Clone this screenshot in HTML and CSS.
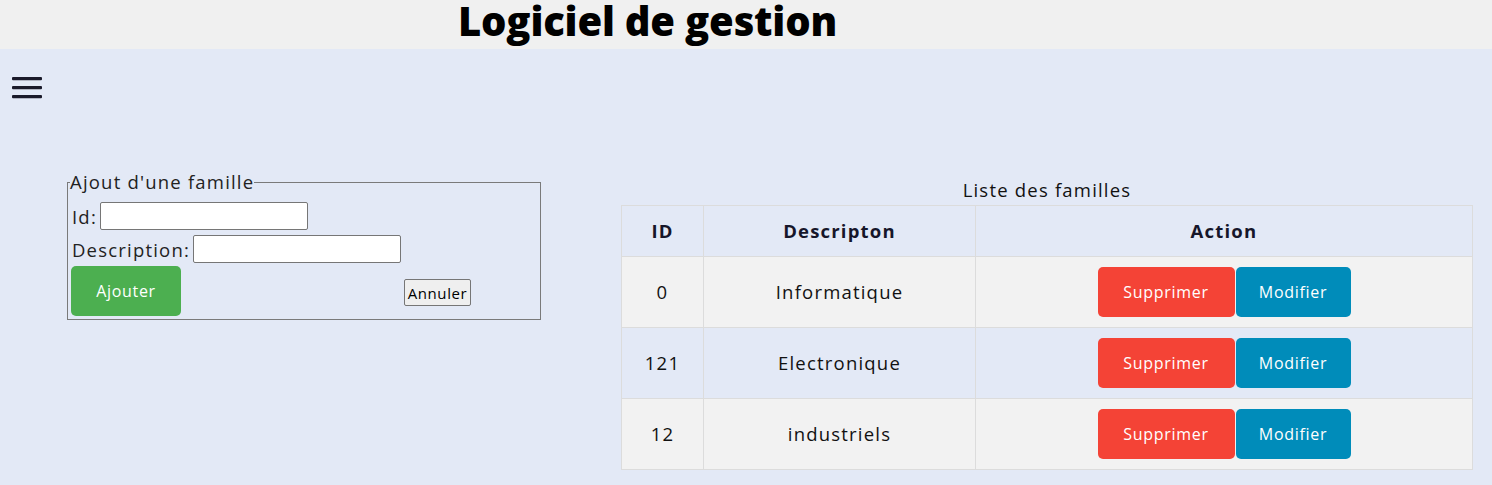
FILE: index.html
```html
<!DOCTYPE html>
<html lang="fr">
<head>
<meta charset="utf-8">
<title>Logiciel de gestion</title>
<link rel="stylesheet" href="styles.css">
</head>
<body>
<header class="top">
  <h1 class="title">Logiciel de gestion</h1>
</header>
<main class="page">
  <div class="menu-bar">
    <svg class="burger" width="30" height="22" viewBox="0 0 30 22" aria-hidden="true">
      <rect x="0" y="0" width="30" height="3.2" rx="1" fill="#1a1a2a"/>
      <rect x="0" y="9" width="30" height="3.2" rx="1" fill="#1a1a2a"/>
      <rect x="0" y="18" width="30" height="3.2" rx="1" fill="#1a1a2a"/>
    </svg>
  </div>
  <div class="content">
    <form class="form-box">
      <fieldset class="fs">
        <legend class="lg">Ajout d'une famille</legend>
        <div class="row row-id">
          <label class="lbl" for="id">Id:</label>
          <input class="inp" id="id" type="text">
        </div>
        <div class="row row-desc">
          <label class="lbl" for="desc">Description:</label>
          <input class="inp" id="desc" type="text">
        </div>
        <div class="row row-btn">
          <button class="btn btn-green" type="button">Ajouter</button>
          <button class="btn-default" type="reset">Annuler</button>
        </div>
      </fieldset>
    </form>
    <div class="table-wrap">
      <table class="tbl">
        <caption class="cap">Liste des familles</caption>
        <thead>
          <tr>
            <th class="c-id">ID</th>
            <th class="c-desc">Descripton</th>
            <th class="c-act">Action</th>
          </tr>
        </thead>
        <tbody>
          <tr class="odd">
            <td class="txt">0</td>
            <td class="txt">Informatique</td>
            <td class="act"><div class="acts"><button class="btn btn-red" type="button">Supprimer</button><button class="btn btn-blue" type="button">Modifier</button></div></td>
          </tr>
          <tr class="even">
            <td class="txt">121</td>
            <td class="txt">Electronique</td>
            <td class="act"><div class="acts"><button class="btn btn-red" type="button">Supprimer</button><button class="btn btn-blue" type="button">Modifier</button></div></td>
          </tr>
          <tr class="odd">
            <td class="txt">12</td>
            <td class="txt">industriels</td>
            <td class="act"><div class="acts"><button class="btn btn-red" type="button">Supprimer</button><button class="btn btn-blue" type="button">Modifier</button></div></td>
          </tr>
        </tbody>
      </table>
    </div>
  </div>
</main>
</body>
</html>
```
FILE: styles.css
```css
html, body {
  margin: 0;
  padding: 0;
}
body {
  background: #e3e9f6;
  font-family: "Open Sans", "Liberation Sans", sans-serif;
  color: #111;
  height: 485px;
  overflow: hidden;
}
.top {
  background: #f0f0f0;
  height: 49px;
  display: flex;
  align-items: flex-start;
}
.title {
  margin: 0;
  padding-left: 458px;
  font-size: 40px;
  font-weight: 800;
  line-height: 42px;
  letter-spacing: -0.2px;
  color: #000;
}
.menu-bar {
  padding: 28px 0 0 12px;
  height: 50px;
}
.burger {
  display: block;
}
.content {
  display: flex;
  align-items: flex-start;
  padding-left: 67px;
  margin-top: 34px;
}
.form-box {
  margin: 0;
  padding-top: 9px;
}
.fs {
  margin: 0;
  width: 474px;
  box-sizing: border-box;
  border: 1px solid #7a7a7a;
  padding: 8px 2px 3px 3px;
}
.lg {
  padding: 0;
  margin-left: -1px;
  font-size: 18.5px;
  letter-spacing: 1.2px;
  line-height: 24px;
  color: #222;
}
.row {
  display: flex;
  align-items: center;
}
.row-id { height: 28px; }
.row-desc { height: 28px; margin-top: 5px; }
.row-btn { height: 50px; margin-top: 3px; }
.lbl {
  font-size: 18.5px;
  letter-spacing: 1.2px;
  color: #222;
  padding-left: 1px;
  margin-right: 3px;
}
.inp {
  width: 208px;
  height: 28px;
  box-sizing: border-box;
  border: 1px solid #767676;
  border-radius: 2px;
  background: #fff;
  margin: 0;
  padding: 1px 2px;
}
.btn {
  border: none;
  color: #fff;
  font-family: "Open Sans", "Liberation Sans", sans-serif;
  font-size: 16px;
  letter-spacing: 0.7px;
  height: 50px;
  border-radius: 5px;
  padding: 0 0 1px;
  cursor: pointer;
}
.btn-green {
  background: #4caf50;
  width: 110px;
}
.btn-default {
  margin-left: 223px;
  margin-top: 3px;
  width: 67px;
  height: 27px;
  box-sizing: border-box;
  background: #efefef;
  border: 1px solid #767676;
  border-radius: 2px;
  font-family: "Open Sans", "Liberation Sans", sans-serif;
  font-size: 15px;
  letter-spacing: 0.6px;
  color: #000;
  padding: 0;
}
.table-wrap {
  margin-left: 80px;
  margin-top: 17px;
}
.tbl {
  width: 852px;
  border-collapse: collapse;
  font-size: 18.5px;
  letter-spacing: 1.2px;
  color: #111;
}
.cap {
  font-size: 18.5px;
  line-height: 24px;
  padding-bottom: 3px;
  color: #111;
}
.tbl th, .tbl td {
  border: 1px solid #dcdcdc;
  text-align: center;
  padding: 0;
}
.tbl th {
  height: 48px;
  padding-bottom: 2px;
  font-weight: 700;
  color: #16162a;
  background: #e3e9f6;
}
.tbl td.txt {
  height: 68px;
  padding-bottom: 2px;
}
.tbl td.act {
  height: 70px;
}
.c-id { width: 81px; }
.c-desc { width: 271px; }
.odd td { background: #f2f2f2; }
.even td { background: #e3e9f6; }
.acts {
  display: flex;
  justify-content: center;
}
.btn-red {
  background: #f44336;
  width: 137px;
}
.btn-blue {
  background: #008cba;
  width: 115px;
  margin-left: 1px;
}
```
